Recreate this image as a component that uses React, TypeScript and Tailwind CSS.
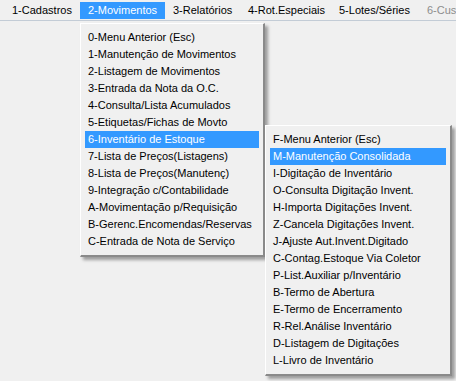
import React from 'react';

const barItems = [
  { label: '1-Cadastros', w: 'w-[76px]' },
  { label: '2-Movimentos', w: 'w-[85px]', active: true },
  { label: '3-Relatórios', w: 'w-[75px]' },
  { label: '4-Rot.Especiais', w: 'w-[91px]' },
  { label: '5-Lotes/Séries', w: 'w-[88px]' },
  { label: '6-Custos', w: 'w-[70px]', disabled: true },
];

const movimentos = [
  '0-Menu Anterior (Esc)',
  '1-Manutenção de Movimentos',
  '2-Listagem de Movimentos',
  '3-Entrada da Nota da O.C.',
  '4-Consulta/Lista Acumulados',
  '5-Etiquetas/Fichas de Movto',
  '6-Inventário de Estoque',
  '7-Lista de Preços(Listagens)',
  '8-Lista de Preços(Manutenç)',
  '9-Integração c/Contabilidade',
  'A-Movimentação p/Requisição',
  'B-Gerenc.Encomendas/Reservas',
  'C-Entrada de Nota de Serviço',
];

const inventario = [
  'F-Menu Anterior (Esc)',
  'M-Manutenção Consolidada',
  'I-Digitação de Inventário',
  'O-Consulta Digitação Invent.',
  'H-Importa Digitações Invent.',
  'Z-Cancela Digitações Invent.',
  'J-Ajuste Aut.Invent.Digitado',
  'C-Contag.Estoque Via Coletor',
  'P-List.Auxiliar p/Inventário',
  'B-Termo de Abertura',
  'E-Termo de Encerramento',
  'R-Rel.Análise Inventário',
  'D-Listagem de Digitações',
  'L-Livro de Inventário',
];

const PopupMenu: React.FC<{ items: string[]; selected: number; className: string }> = ({
  items,
  selected,
  className,
}) => (
  <div
    className={`absolute border-t border-l border-t-white border-l-white border-r-2 border-b-2 border-r-[#8a8a8a] border-b-[#8a8a8a] bg-[#f0f0f0] px-[4px] py-[5px] shadow-[3px_3px_3px_rgba(0,0,0,0.35)] ${className}`}
  >
    {items.map((item, i) => (
      <div
        key={item}
        className={`flex h-[17px] items-center whitespace-nowrap pl-[3px] ${
          i === selected ? 'bg-[#3399ff] text-white' : 'text-black'
        }`}
      >
        {item}
      </div>
    ))}
  </div>
);

export default function App() {
  return (
    <div className="relative h-[381px] w-[456px] overflow-hidden bg-[#f0f0f0] font-['Liberation_Sans',Arial,sans-serif] text-[11px] text-black">
      <div className="flex h-[21px] items-stretch border-b border-b-[#c3ccd6] pl-[4px] pt-[2px] pb-[1px]">
        {barItems.map((b) => (
          <div
            key={b.label}
            className={`flex shrink-0 items-center whitespace-nowrap px-[8px] ${b.w} ${
              b.active ? 'bg-[#3399ff] text-white' : b.disabled ? 'text-[#8d8d8d]' : 'text-black'
            }`}
          >
            {b.label}
          </div>
        ))}
      </div>

      <PopupMenu items={movimentos} selected={6} className="left-[80px] top-[23px] w-[185px]" />
      <PopupMenu items={inventario} selected={1} className="left-[265px] top-[125px] w-[187px]" />
    </div>
  );
}
